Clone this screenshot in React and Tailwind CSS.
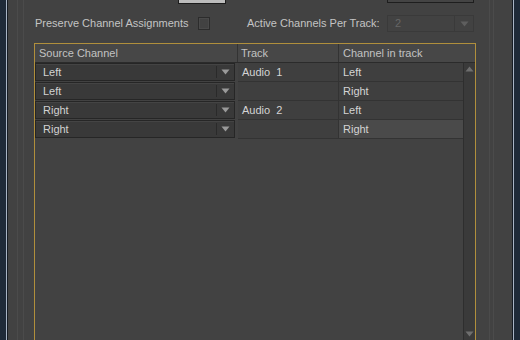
const rows = [
  { source: 'Left', track: 'Audio  1', channel: 'Left' },
  { source: 'Left', track: '', channel: 'Right' },
  { source: 'Right', track: 'Audio  2', channel: 'Left' },
  { source: 'Right', track: '', channel: 'Right', selected: true },
];

const Arrow = ({ className = '' }) => (
  <svg width="9" height="6" viewBox="0 0 9 6" className={className}>
    <path d="M0.5 0.5 L8.5 0.5 L4.5 5.5 Z" fill="currentColor" />
  </svg>
);

const SourceSelect = ({ value }) => (
  <div className="flex h-[18px] w-[200px] items-center border border-[#262626] bg-[#393939] shadow-[inset_0_1px_0_#444]">
    <span className="flex-1 pl-[7px] text-[#d2d2d2]">{value}</span>
    <span className="h-[12px] w-px bg-[#2a2a2a]" />
    <span className="flex w-[17px] justify-center text-[#9a9a9a]">
      <Arrow />
    </span>
  </div>
);

const App = () => {
  return (
    <div
      className="flex h-[340px] w-[520px] overflow-hidden bg-[#424242] text-[11px] leading-none"
      style={{ fontFamily: '"Liberation Sans", Arial, sans-serif' }}
    >
      {/* left window frame */}
      <div className="flex w-[8px] bg-[#1f2a38]">
        <div className="w-[6px]" />
        <div className="w-px bg-[#a9b4c4]" />
        <div className="w-px bg-[#161c24]" />
      </div>

      <div className="flex flex-1 pl-[9px] pr-[18px]">
        <div className="flex flex-1 border-x border-[#4b4b4b] pl-[5px] pr-[3px]">
          <div className="flex flex-1 flex-col border-x border-[#4b4b4b] pl-[10px] pr-[13px]">
            {/* buttons cut off at the top */}
            <div className="flex h-[4px]">
              <div className="ml-[144px] h-[4px] w-[48px] border-x border-b border-[#1c1c1c] bg-[#bdbdbd]" />
              <div className="ml-[161px] h-[3px] w-[87px] border-x border-b border-[#1e1e1e] bg-[#444]" />
            </div>

            {/* options row */}
            <div className="mt-[11px] flex h-[17px] items-center text-[#c4c4c4]">
              <span className="w-[164px] pl-px">Preserve Channel Assignments</span>
              <span className="h-[13px] w-[12px] border border-[#2c2c2c] shadow-[inset_0_0_0_1px_#4a4a4a]" />
              <span className="ml-[37px] w-[140px]">Active Channels Per Track:</span>
              <div className="flex h-[17px] w-[87px] items-center border border-[#3a3a3a] bg-[#424242]">
                <span className="flex-1 pl-[7px] text-[#666]">2</span>
                <span className="h-[15px] w-px bg-[#3a3a3a]" />
                <span className="flex w-[18px] justify-center text-[#5e5e5e]">
                  <Arrow />
                </span>
              </div>
            </div>

            {/* channel table */}
            <div className="mt-[11px] flex flex-1 flex-col border-x border-t border-[#b08f3c]">
              <div className="flex h-[19px] items-center border-b border-[#2b2b2b] bg-[#474747] text-[#c2c2c2]">
                <span className="w-[202px] pl-[4px]">Source Channel</span>
                <span className="h-[18px] w-px bg-[#333]" />
                <span className="w-[100px] pl-[3px]">Track</span>
                <span className="h-[18px] w-px bg-[#333]" />
                <span className="flex-1 pl-[4px]">Channel in track</span>
              </div>

              <div className="flex flex-1">
                <div className="flex flex-1 flex-col">
                  {rows.map((row, i) => (
                    <div key={i} className="flex h-[19px] text-[#d4d4d4]">
                      <div className="flex w-[203px] items-start">
                        <SourceSelect value={row.source} />
                      </div>
                      <div className="flex w-[100px] items-center whitespace-pre border-b border-[#333] bg-[#3f3f3f] pl-[4px]">
                        {row.track}
                      </div>
                      <div
                        className={`flex flex-1 items-center border-b border-l border-[#333] pl-[4px] ${
                          row.selected ? 'bg-[#4a4a4a]' : 'bg-[#3f3f3f]'
                        }`}
                      >
                        {row.channel}
                      </div>
                    </div>
                  ))}
                </div>

                {/* scrollbar */}
                <div className="flex w-[12px] flex-col items-center justify-between border-l border-[#2e2e2e] bg-[#3a3a3a] py-[3px] text-[#6e6e6e]">
                  <Arrow className="rotate-180" />
                  <Arrow />
                </div>
              </div>
            </div>
          </div>
        </div>
      </div>

      {/* right window frame */}
      <div className="flex w-[8px] bg-[#1f2a38]">
        <div className="w-px bg-[#161c24]" />
        <div className="w-px bg-[#a9b4c4]" />
        <div className="flex-1" />
      </div>
    </div>
  );
};

export default App;
